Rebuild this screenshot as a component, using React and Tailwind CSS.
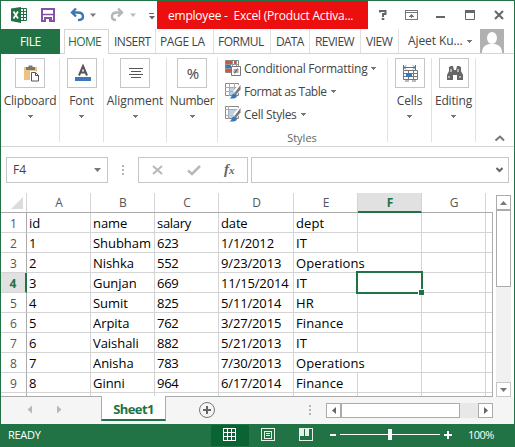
import React from "react";

const rows = [
  ["id", "name", "salary", "date", "dept"],
  ["1", "Shubham", "623", "1/1/2012", "IT"],
  ["2", "Nishka", "552", "9/23/2013", "Operations"],
  ["3", "Gunjan", "669", "11/15/2014", "IT"],
  ["4", "Sumit", "825", "5/11/2014", "HR"],
  ["5", "Arpita", "762", "3/27/2015", "Finance"],
  ["6", "Vaishali", "882", "5/21/2013", "IT"],
  ["7", "Anisha", "783", "7/30/2013", "Operations"],
  ["8", "Ginni", "964", "6/17/2014", "Finance"],
];

const colWidths = ["w-16", "w-16", "w-16", "w-[75px]", "w-16", "w-16", "w-16"];
const cellTracking = [
  "tracking-[0px]",
  "tracking-[-0.05px]",
  "tracking-[-0.3px]",
  "tracking-[-0.15px]",
  "tracking-[0.1px]",
];

function Caret({ className = "text-[#777]" }) {
  return (
    <svg width="5" height="3" className={"shrink-0 " + className} shapeRendering="crispEdges">
      <path d="M0 0h5v1H0zM1 1h3v1H1zM2 2h1v1H2z" fill="currentColor" />
    </svg>
  );
}

function TitleBar() {
  return (
    <div className="flex h-7 shrink-0">
      <svg width="156" height="28" className="shrink-0">
        <path d="M19 7.500h6.500v12H19" fill="#fff" stroke="#217346" />
        <path d="M19 10.500h6M19 13.500h6M19 16.500h6M22.500 8v11" stroke="#217346" />
        <path d="M10 7.500L20 6v16l-10-2z" fill="#217346" />
        <path d="M12.500 10.500l4.500 7M17 10.500l-4.500 7" stroke="#fff" strokeWidth="1.700" />
        <path d="M41 8h12v12H41z" fill="#fff" stroke="#8450a8" strokeWidth="2" />
        <path d="M41 13.500h12" stroke="#8450a8" strokeWidth="1.500" />
        <path d="M43 16h8v5h-8z" fill="#8450a8" />
        <path d="M45 18h3v3h-3z" fill="#fff" />
        <path d="M75 7.500l-4 4 4 4M70.500 11.500h6c4 0 5.500 2 5.500 4 0 2.500-2 3.500-5 3.500" fill="none" stroke="#3b78b5" strokeWidth="2.400" />
        <path d="M89 12.500h6l-3 3.500z" fill="#777" />
        <path d="M117 7.500l4 4-4 4M121.500 11.500h-5.500c-4 0-5 2-5 4 0 2.500 1.500 3.500 4 3.500" fill="none" stroke="#b5b5b5" strokeWidth="2.400" />
        <path d="M129 12.500h6l-3 3.500z" fill="#bbb" />
        <path d="M148 12h5v1h-5zM148 15h6l-3 3.500z" fill="#666" />
      </svg>
      <div className="-mt-px h-[29px] w-[211px] shrink-0 bg-[#eb0f0f] pl-[11px] pt-px text-[12px] leading-[29px] tracking-[-0.22px] text-white whitespace-pre">
        employee -  Excel (Product Activa...
      </div>
      <svg width="145" height="28" className="shrink-0">
        <path d="M12 11.500v-1.500h5.500v3h-2.500v3M13.700 18h2.600" fill="none" stroke="#666" strokeWidth="2" />
        <g fill="none" stroke="#777" shapeRendering="crispEdges">
          <path d="M37.500 9.500h12v9h-12zM37 11.500h12M43.500 13v4" />
          <path d="M41 15h5M42 14h3" />
        </g>
        <path d="M68 15h9v2h-9z" fill="#666" />
        <path d="M97.500 10.500h9v8h-9z" fill="none" stroke="#666" />
        <path d="M97 9h10v3H97z" fill="#666" />
        <path d="M127 10l8 8M135 10l-8 8" stroke="#666" strokeWidth="2" />
      </svg>
    </div>
  );
}

function Tab({ className, children }) {
  return <div className={"h-6 shrink-0 whitespace-nowrap border-r border-[#e1e1e1] " + className}>{children}</div>;
}

function TabStrip() {
  return (
    <div className="flex h-[25px] shrink-0 border-b border-[#d4d4d4] text-[12px] leading-[25px] text-[#444]">
      <div className="h-[25px] w-[59px] shrink-0 bg-[#217346] pl-[19px] tracking-[-0.4px] text-white">FILE</div>
      <div className="ml-1 h-[25px] w-[45px] shrink-0 border border-b-0 border-[#d4d4d4] bg-white pl-[3px] leading-[23px] tracking-[-0.65px] text-[#217346]">HOME</div>
      <Tab className="w-[47px] pl-[5px] tracking-[-0.5px]">INSERT</Tab>
      <Tab className="w-[58px] pl-[4px] tracking-[-0.35px]">PAGE LA</Tab>
      <Tab className="w-[57px] pl-[4px] tracking-[-0.5px]">FORMUL</Tab>
      <Tab className="w-[39px] pl-[5px] tracking-[-0.75px]">DATA</Tab>
      <Tab className="w-[51px] pl-[5px] tracking-[-0.55px]">REVIEW</Tab>
      <Tab className="w-[38px] pl-[5px] tracking-[-0.45px]">VIEW</Tab>
      <div className="flex w-[81px] shrink-0 items-center pl-[9px]">
        <span className="w-[59px] tracking-[-0.1px] leading-6">Ajeet Ku...</span>
        <Caret />
      </div>
      <svg width="24" height="24" className="shrink-0">
        <path d="M0 0h24v24H0z" fill="#b1b1b1" />
        <ellipse cx="12" cy="9" rx="5" ry="6" fill="#fff" />
        <path d="M2 24c0-6 3-8 7-9h6c4 1 7 3 7 9z" fill="#fff" />
      </svg>
    </div>
  );
}

function Group({ className, label, labelClass, children }) {
  return (
    <div className={"flex h-[84px] shrink-0 flex-col items-center border-r border-[#e1e1e1] " + className}>
      <div className="h-[30px] w-[30px] shrink-0 border border-[#c6c6c6]">{children}</div>
      <div className={"mt-[5px] whitespace-nowrap leading-4 " + labelClass}>{label}</div>
      <Caret className="mt-[6px] text-[#777]" />
    </div>
  );
}

function StyleIcon({ kind }) {
  return (
    <svg width="17" height="17" className="mr-[2px] shrink-0">
      <path d="M.5.500h13v12H.5z" fill="#fff" stroke="#888" />
      {kind === "conditional" ? (
        <g>
          <path d="M1 1h6v3H1zM1 9h5v3H1z" fill="#d65532" />
          <path d="M1 5h5v3H1z" fill="#3b78b5" />
          <path d="M9 1h2v3H9z" fill="#d65532" />
          <path d="M.5 4.500h13M.5 8.500h8M7.500 1v6M11.500 1v5" stroke="#999" />
          <path d="M6.500 6.500h9v9h-9z" fill="#fff" stroke="#777" />
          <path d="M8.500 10h5M8.500 12h5M12.500 8.500l-3 5" stroke="#555" />
        </g>
      ) : (
        <g>
          <path d="M4 4h9v8H4z" fill="#bcd0e8" />
          <path d={kind === "table" ? "M0 4.500h14M0 8.500h12M4.500 0v13M9.500 0v10" : "M0 3.500h14M3.500 0v13M0 9.500h4"} stroke="#aaa" />
          <path d="M16 3l-6 7" stroke="#fff" strokeWidth="5" />
          <path d="M15.500 2v4.500l-4.500 5-1.500-1.500z" fill="#777" />
          <path d="M4 15.500c3 0 2-5 5.500-5 3.500 1 3 5-1 5z" fill="#3b78b5" />
        </g>
      )}
    </svg>
  );
}

function StyleItem({ kind, label, className }) {
  return (
    <div className="flex h-[23px] items-center">
      <StyleIcon kind={kind} />
      <span className={"mr-[4px] whitespace-nowrap " + className}>{label}</span>
      <Caret />
    </div>
  );
}

function Ribbon() {
  return (
    <div className="flex h-[93px] shrink-0 border-b border-[#d4d4d4] pt-1 text-[12px] text-[#444]">
      <Group className="w-[59px]" label="Clipboard" labelClass="tracking-[-0.2px]">
        <svg width="28" height="28">
          <path d="M8 8h13v13H8z" fill="#eac282" />
          <path d="M10 8h9v3h-9zM12.500 6.500h4v2h-4z" fill="#777" />
          <path d="M15.500 13.500h4l3 3v5.500h-7z" fill="#fff" stroke="#fff" strokeWidth="3" />
          <path d="M15.500 13.500h4l3 3v5.500h-7z" fill="#fff" stroke="#555" />
          <path d="M19.500 13.500v3H23" fill="none" stroke="#555" />
        </svg>
      </Group>
      <Group className="w-[44px]" label="Font" labelClass="tracking-[-0.1px]">
        <svg width="28" height="28">
          <path d="M11 16.500L15 7l4 9.500M12.500 13.500h5" fill="none" stroke="#555" strokeWidth="2" />
          <path d="M7 18h16v4H7z" fill="#3b78b5" />
        </svg>
      </Group>
      <Group className="w-[63px]" label="Alignment" labelClass="tracking-[-0.05px]">
        <svg width="28" height="28" shapeRendering="crispEdges">
          <path d="M8 9.500h14M10 12.500h10M8 15.500h14M10 18.500h10" stroke="#555" />
        </svg>
      </Group>
      <Group className="w-[51px]" label="Number" labelClass="tracking-[-0.3px]">
        <div className="pl-[2px] text-center text-[15px] leading-[29px]">%</div>
      </Group>
      <div className="flex h-[84px] w-[170px] shrink-0 flex-col border-r border-[#e1e1e1] pl-[7px]">
        <div className="-mt-px">
          <StyleItem kind="conditional" label="Conditional Formatting" className="tracking-[-0.24px]" />
          <StyleItem kind="table" label="Format as Table" className="tracking-[-0.45px]" />
          <StyleItem kind="cell" label="Cell Styles" className="tracking-[-0.3px]" />
        </div>
        <div className="-ml-2 mt-1 text-center text-[11px] leading-[15px] text-[#666]">Styles</div>
      </div>
      <Group className="w-[44px]" label="Cells" labelClass="tracking-[-0.1px]">
        <svg width="28" height="28">
          <path d="M7.500 6v5M19.500 6v5M8 8.500h11M10 6.500l-2 2 2 2M17 6.500l2 2-2 2" fill="none" stroke="#3b78b5" />
          <path d="M7.500 11.500h14v9h-14zM7 17.500h15M12.500 11v10M17.500 11v10M7 14.500h15" fill="none" stroke="#777" />
          <path d="M10 14h6v4h-6z" fill="#3b78b5" />
          <path d="M9 22h4M16 22h4" stroke="#777" />
        </svg>
      </Group>
      <Group className="w-[44px]" label="Editing" labelClass="tracking-[-0.15px]">
        <svg width="28" height="28">
          <path d="M7 21v-5l2-4V8l2-1h2l1 4h2l1-4h2l2 1v4l2 4v5h-6v-5h-4v5z" fill="#666" />
          <path d="M9 17v2M20 17v2M11 10v3M18 10v3" stroke="#fff" />
        </svg>
      </Group>
      <svg width="14" height="9" className="ml-[16px] mt-[75px] shrink-0">
        <path d="M3.500 7.500L8 3.500l4 4" fill="none" stroke="#777" strokeWidth="2" />
      </svg>
    </div>
  );
}

function FormulaBar() {
  return (
    <div className="flex h-[46px] shrink-0 pl-[5px] pt-[10px]">
      <div className="flex h-[26px] w-[102px] shrink-0 items-center justify-between border border-[#c6c6c6] pl-[6px] pr-[6px] text-[12px] text-[#444]">
        F4
        <svg width="7" height="4"><path d="M0 0h7L3.500 4z" fill="#777" /></svg>
      </div>
      <svg width="30" height="26" className="shrink-0" shapeRendering="crispEdges">
        <path d="M14 8h2v2h-2zM14 12h2v2h-2zM14 16h2v2h-2z" fill="#b5b5b5" />
      </svg>
      <div className="flex h-[26px] w-[110px] shrink-0 border border-[#c6c6c6]">
        <svg width="66" height="24" className="shrink-0">
          <path d="M14 8l9 8M23 8l-9 8" stroke="#b8b8b8" strokeWidth="2" />
          <path d="M49 12.500l4 3.500 8-8" fill="none" stroke="#b8b8b8" strokeWidth="2.500" />
        </svg>
        <div className="pl-[19px] font-['Liberation_Serif',serif] text-[15px] font-bold italic leading-[22px] text-[#666]">
          f<span className="text-[11px]">x</span>
        </div>
      </div>
      <div className="ml-[3px] flex h-[26px] w-[258px] shrink-0 items-center justify-end border border-[#c6c6c6] pr-[5px]">
        <svg width="7" height="6"><path d="M.5 1l3 3 3-3" fill="none" stroke="#666" strokeWidth="2" /></svg>
      </div>
    </div>
  );
}

function Grid() {
  return (
    <div className="flex h-[204px] shrink-0">
      <div className="w-[492px] shrink-0 overflow-hidden border-b border-[#ababab]">
        <div className="flex h-5 border-b border-[#ababab] text-[12px] leading-5 text-[#555]">
          <div className="flex w-[26px] shrink-0 items-start border-r border-[#d4d4d4] pl-[10px] pt-[4px]">
            <svg width="12" height="12"><path d="M12 0v12H0z" fill="#dcdcdc" /></svg>
          </div>
          {["A", "B", "C", "D", "E", "F", "G"].map((letter, i) => (
            <div
              key={letter}
              className={
                "shrink-0 border-r border-[#d4d4d4] pl-px text-center " + colWidths[i] +
                (letter === "F" ? " h-5 border-b-2 border-b-[#217346] bg-[#e1e1e1] font-bold leading-[19px] text-[#217346]" : "")
              }
            >
              {letter}
            </div>
          ))}
        </div>
        <div className="box-content h-[183px] w-[491px] overflow-hidden border-r border-[#ababab]">
          {[...rows, []].map((row, r) => (
            <div key={r} className="flex h-5 text-[13px] leading-[21px] text-black">
              <div
                className={
                  "h-5 w-[26px] shrink-0 border-b border-b-[#d4d4d4] text-center text-[12px] " +
                  (r === 3
                    ? "border-r-2 border-r-[#217346] bg-[#e1e1e1] font-bold text-[#217346]"
                    : "border-r border-r-[#ababab] text-[#555]")
                }
              >
                {r < 9 ? r + 1 : ""}
              </div>
              {colWidths.map((w, c) => (
                <div
                  key={c}
                  className={
                    "relative h-5 shrink-0 whitespace-nowrap border-b border-[#d4d4d4] pl-[2px] " + w + " " + (cellTracking[c] || "") +
                    (c === 4 && row[4] === "Operations" ? "" : " border-r")
                  }
                >
                  {row[c]}
                  {r === 3 && c === 5 && (
                    <div className="absolute -left-[2px] -top-[2px] z-10 h-[23px] w-[67px] border-2 border-[#217346]">
                      <div className="absolute -bottom-[3px] -right-[3px] h-[6px] w-[6px] border-l border-t border-white bg-[#217346]" />
                    </div>
                  )}
                </div>
              ))}
              <div className="h-5 flex-1 border-b border-[#d4d4d4]" />
            </div>
          ))}
        </div>
      </div>
      <div className="ml-[3px] mt-[2px] flex h-[202px] w-[15px] shrink-0 flex-col bg-[#f1f1f1]">
        <div className="flex h-[15px] shrink-0 items-center justify-center border border-[#ababab] bg-white">
          <svg width="7" height="4"><path d="M0 4h7L3.500 0z" fill="#777" /></svg>
        </div>
        <div className="h-[77px] shrink-0 border border-[#ababab] bg-white" />
        <div className="mt-auto flex h-[15px] shrink-0 items-center justify-center border border-[#c6c6c6] bg-white">
          <svg width="7" height="4"><path d="M0 0h7L3.500 4z" fill="#777" /></svg>
        </div>
      </div>
    </div>
  );
}

function SheetTabs() {
  return (
    <div className="flex h-[27px] shrink-0 bg-[#f5f5f5]">
      <svg width="100" height="27" className="shrink-0">
        <path d="M31 8.500v8l-4.500-4zM56 8.500v8l4.500-4z" fill="#b8b8b8" />
      </svg>
      <div className="-mt-px h-[25px] w-[65px] shrink-0 border-x border-b-2 border-x-[#ababab] border-b-[#217346] bg-white text-center text-[13px] font-bold leading-[26px] tracking-[-0.6px] text-[#217346]">
        Sheet1
      </div>
      <svg width="160" height="27" className="shrink-0">
        <circle cx="41" cy="13" r="7.500" fill="none" stroke="#777" />
        <path d="M37 13h8M41 9v8" stroke="#666" strokeWidth="2" />
        <path d="M143 8h2v2h-2zM143 12h2v2h-2zM143 16h2v2h-2z" fill="#b5b5b5" />
      </svg>
      <div className="mt-[6px] flex h-[15px] w-[167px] shrink-0 bg-[#e8e8e8]">
        <div className="flex w-[15px] items-center justify-center border border-[#ababab] bg-white">
          <svg width="4" height="7"><path d="M4 0v7L0 3.500z" fill="#666" /></svg>
        </div>
        <div className="w-[119px] border border-[#ababab] bg-white" />
        <div className="ml-auto flex w-[15px] items-center justify-center border border-[#ababab] bg-white">
          <svg width="4" height="7"><path d="M0 0v7l4-3.500z" fill="#666" /></svg>
        </div>
      </div>
    </div>
  );
}

function StatusBar() {
  return (
    <div className="-mx-px flex h-[23px] shrink-0 bg-[#217346] text-white">
      <span className="w-[211px] shrink-0 pl-[8px] text-[11px] leading-[22px] tracking-[-0.3px]">READY</span>
      <div className="mt-px h-[21px] w-[38px] shrink-0 bg-[#0a6332] pl-[12px] pt-[3px]">
        <svg width="13" height="13" shapeRendering="crispEdges">
          <path d="M.5.500h12v12H.5zM4.500 0v13M8.500 0v13M0 4.500h13M0 8.500h13" fill="none" stroke="#fff" />
        </svg>
      </div>
      <svg width="218" height="23" className="shrink-0" shapeRendering="crispEdges">
        <path d="M12.500 4.500h13v12h-13zM15.500 7.500h7v7h-7zM17 9.500h4M17 11.500h4" fill="none" stroke="#e4f0e8" />
        <path d="M50.500 4.500h13v12h-13z" fill="none" stroke="#e4f0e8" />
        <path d="M51 5h4v7h-4zM56 5h4v7h-4z" fill="#e4f0e8" />
        <path d="M81 10h6v2h-6zM91 10h100v1H91zM139 5h4v11h-4zM195 10h8v2h-8zM198 7h2v8h-2z" fill="#fff" />
      </svg>
      <span className="pl-px text-[11px] leading-[22px] tracking-[-0.5px]">100%</span>
    </div>
  );
}

export default function App() {
  return (
    <div className="flex h-[447px] w-[515px] flex-col overflow-hidden border-x border-t border-[#217346] bg-white font-['Open_Sans','Noto_Sans',sans-serif]">
      <TitleBar />
      <TabStrip />
      <Ribbon />
      <FormulaBar />
      <Grid />
      <SheetTabs />
      <StatusBar />
    </div>
  );
}
